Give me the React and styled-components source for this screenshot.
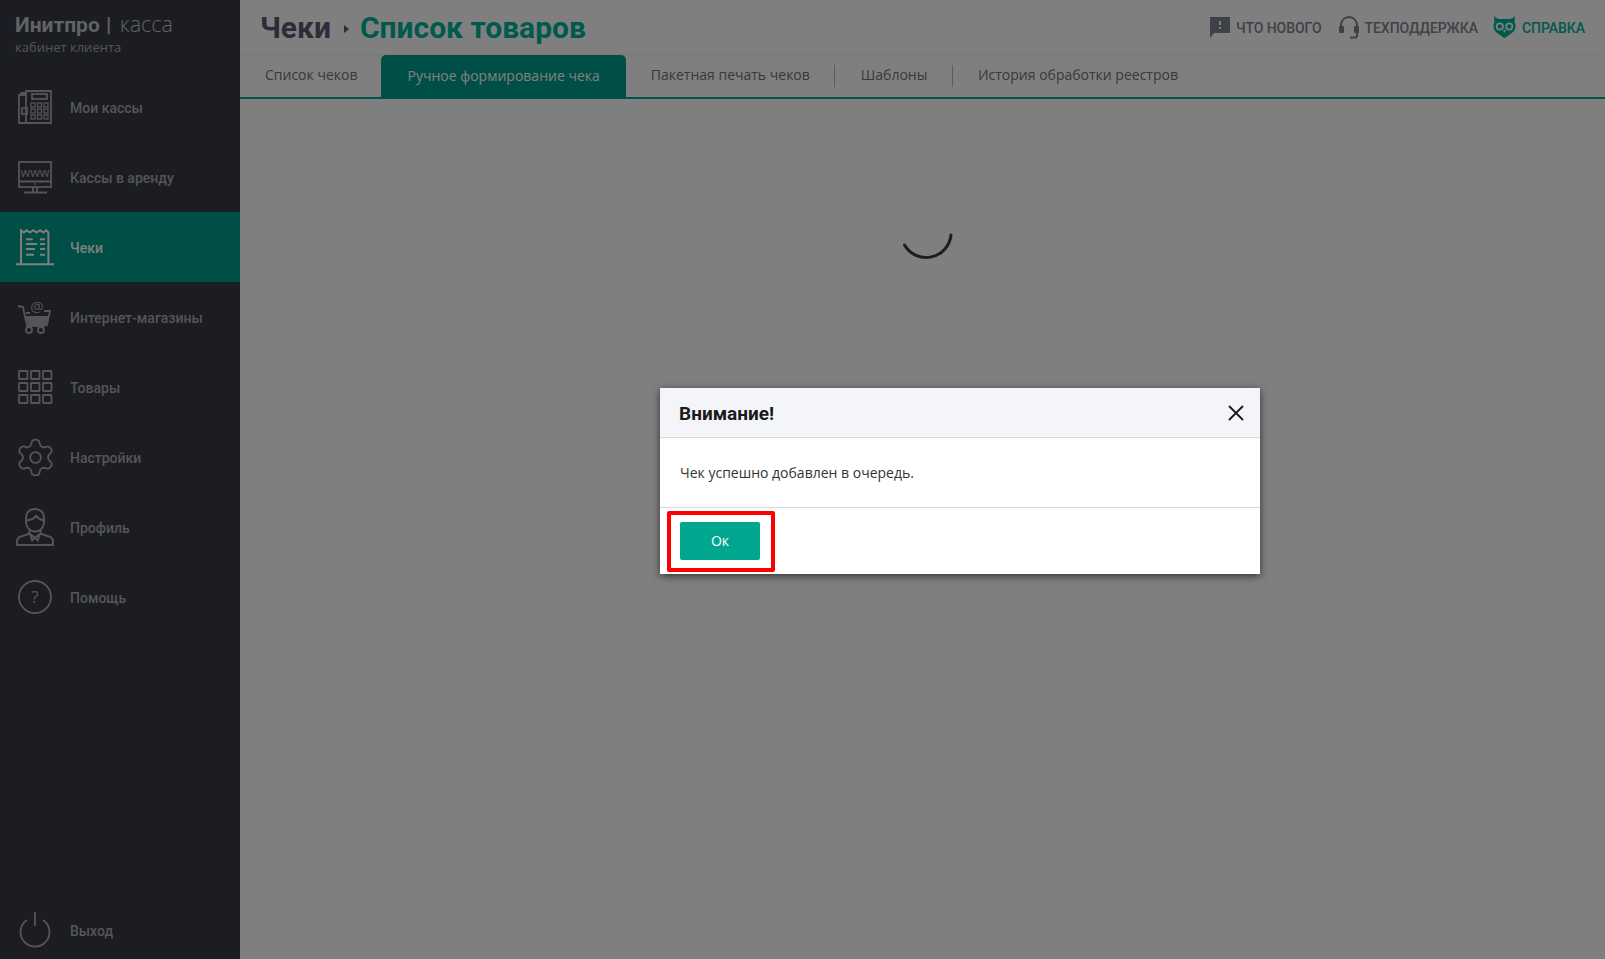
import React from "react";
import styled, { createGlobalStyle } from "styled-components";
import { Settings } from "lucide-react";

const GlobalStyle = createGlobalStyle`
  html, body {
    margin: 0;
    height: 100%;
    background: #fff;
  }
  * {
    box-sizing: border-box;
  }
  #root {
    height: 100%;
  }
`;

const Svg = ({ size = 34, children }) => (
  <svg
    width={size}
    height={size}
    viewBox="0 0 34 34"
    fill="none"
    stroke="currentColor"
    strokeWidth="1.8"
  >
    {children}
  </svg>
);

const FaxIcon = () => (
  <Svg>
    <path d="M8 5H1v28h32V1H8v32" />
    <path d="M1 8c0-3 1.500-5 3-5h4" />
    <rect x="14" y="4" width="15" height="5" />
    <rect x="4" y="18" width="5" height="6" />
    {[13, 19.5, 26].map((x) =>
      [13, 19, 25].map((y) => (
        <rect key={`${x}-${y}`} x={x} y={y} width="4" height="4" strokeWidth="1.3" />
      ))
    )}
  </Svg>
);

const WwwIcon = () => (
  <Svg>
    <rect x="1" y="2" width="32" height="25" />
    <path d="M1 21.500h32M15 27v5M19 27v5M6 32.500h23" />
    <circle cx="17" cy="24" r="0.900" fill="currentColor" stroke="none" />
    <text x="17" y="17" textAnchor="middle" fontFamily="'Open Sans', sans-serif" fontSize="12.500" fill="currentColor" stroke="none">
      www
    </text>
  </Svg>
);

const ReceiptIcon = () => (
  <Svg size={38}>
    <path d="M4.500 32V2l2.500 2 2.500-2 3 2 3-2 3 2 3-2 3 2 2.500-2 2 2V32" />
    <path d="M0 32.500h34" />
    <path d="M9 10h6M9 14.300h10M9 18.800h8M9 24h7M21.500 10h4.500M21.500 14.300h4.500M21.500 18.800h4.500M21.500 24h4.500" />
  </Svg>
);

const CartIcon = () => (
  <Svg>
    <path d="M0 6l5 1 4 19h18" />
    <path d="M8 13h4M26 11h6l-3 14H11l-2-8h21" />
    <path d="M9 17h21l-2 8H11z" fill="currentColor" />
    <circle cx="11" cy="30" r="3" />
    <circle cx="23" cy="30" r="3" />
    <text x="19" y="12" textAnchor="middle" fontFamily="'Open Sans', sans-serif" fontSize="15" fill="currentColor" stroke="none">
      @
    </text>
  </Svg>
);

const GridIcon = () => (
  <Svg>
    {[1, 13, 25].map((x) =>
      [1, 13, 25].map((y) => (
        <rect key={`${x}-${y}`} x={x} y={y} width="8.500" height="8" rx="0.500" />
      ))
    )}
  </Svg>
);

const ProfileIcon = () => (
  <Svg size={38}>
    <path d="M9 13V8c0-4 3.500-7 8-7s8 3 8 7v5" />
    <path d="M9 11c4 0 7-1.500 9-4 1.500 2 4 3.500 7 4v2c0 4.500-3.500 8-8 8s-8-3.500-8-8z" />
    <path d="M12 20v3l-9 3-2 2.500V33h32v-4.500L31 26l-9-3v-3" />
    <path d="M12 23l5 3.500 5-3.500M13 24l1.500 5 2.500-2.500 2.500 2.500 1.500-5" />
  </Svg>
);

const HelpIcon = () => (
  <Svg>
    <circle cx="17" cy="17" r="16" />
    <text x="17" y="23" textAnchor="middle" fontFamily="'Open Sans', sans-serif" fontSize="17" fill="currentColor" stroke="none">
      ?
    </text>
  </Svg>
);

const PowerIcon = () => (
  <Svg>
    <path d="M9 7A14.500 14.500 0 1 0 25 7" />
    <path d="M17 -1v14" />
  </Svg>
);

const MessageIcon = () => (
  <svg width="21" height="21" viewBox="0 0 21 21" fill="currentColor">
    <path d="M1 0h20v16H5l-4 5z" />
    <rect x="10" y="4" width="2" height="4" fill="#ffffff" />
    <rect x="10" y="10" width="2" height="2" fill="#ffffff" />
  </svg>
);

const HeadsetIcon = () => (
  <svg width="20" height="23" viewBox="0 0 20 23" fill="none" stroke="currentColor" strokeWidth="2">
    <path d="M2 14V9a8 8 0 0 1 16 0v12" />
    <rect x="0" y="10" width="5" height="7" rx="1" fill="currentColor" stroke="none" />
    <rect x="15" y="10" width="5" height="7" rx="1" fill="currentColor" stroke="none" />
    <path d="M11 21.500h7" />
  </svg>
);

const OwlIcon = () => (
  <svg width="23" height="22" viewBox="0 0 23 22" fill="currentColor">
    <path d="M1 0c2 2 4 3 5.500 3h10C18 3 20 2 22 0l-.5 6c1.500 2.500 1.500 6.500-.5 9-2 2.500-6 4.500-9.500 7C8 19.500 4 17.500 2 15 0 12.500 0 8.500 1.500 6z" />
    <circle cx="6.800" cy="10.500" r="4" fill="#ffffff" />
    <circle cx="16.200" cy="10.500" r="4" fill="#ffffff" />
    <circle cx="6.800" cy="10.500" r="2.200" />
    <circle cx="16.200" cy="10.500" r="2.200" />
    <path d="M10 14h3l-1.500 3z" fill="#ffffff" />
  </svg>
);

const CloseIcon = () => (
  <svg width="16" height="16" viewBox="0 0 16 16" stroke="#1a1a1a" strokeWidth="1.800">
    <path d="M1 1l14 14M15 1L1 15" />
  </svg>
);

const menu = [
  { label: "Мои кассы", icon: <FaxIcon /> },
  { label: "Кассы в аренду", icon: <WwwIcon /> },
  { label: "Чеки", icon: <ReceiptIcon />, active: true },
  { label: "Интернет-магазины", icon: <CartIcon /> },
  { label: "Товары", icon: <GridIcon /> },
  { label: "Настройки", icon: <Settings size={43} strokeWidth={1} /> },
  { label: "Профиль", icon: <ProfileIcon /> },
  { label: "Помощь", icon: <HelpIcon /> },
];

const tabs = [
  { label: "Список чеков", first: true },
  { label: "Ручное формирование чека", active: true },
  { label: "Пакетная печать чеков", divided: true },
  { label: "Шаблоны", divided: true, wide: true },
  { label: "История обработки реестров" },
];

function App() {
  return (
    <Page>
      <GlobalStyle />
      <Sidebar>
        <Logo>
          <LogoTitle>
            <b>Инитпро |</b> касса
          </LogoTitle>
          <LogoCaption>кабинет клиента</LogoCaption>
        </Logo>
        <Menu>
          {menu.map((item) => (
            <MenuItem key={item.label} $active={item.active}>
              <IconSlot>{item.icon}</IconSlot>
              <MenuLabel>{item.label}</MenuLabel>
            </MenuItem>
          ))}
        </Menu>
        <LogoutItem>
          <IconSlot>
            <PowerIcon />
          </IconSlot>
          <MenuLabel>Выход</MenuLabel>
        </LogoutItem>
      </Sidebar>
      <Main>
        <Header>
          <Title>
            Чеки
            <TitleArrow />
            <TitleAccent>Список товаров</TitleAccent>
          </Title>
          <HeaderLinks>
            <HeaderLink>
              <MessageIcon />
              <span>Что нового</span>
            </HeaderLink>
            <HeaderLink>
              <HeadsetIcon />
              <span>Техподдержка</span>
            </HeaderLink>
            <HeaderLink $accent>
              <OwlIcon />
              <span>Справка</span>
            </HeaderLink>
          </HeaderLinks>
        </Header>
        <Tabs>
          {tabs.map((tab) => (
            <Tab
              key={tab.label}
              $active={tab.active}
              $divided={tab.divided}
              $first={tab.first}
              $wide={tab.wide}
            >
              {tab.label}
            </Tab>
          ))}
        </Tabs>
        <Content>
          <svg width="60" height="60" viewBox="0 0 60 60" fill="none">
            <path d="M7.500 43a25 25 0 0 0 46.500-10" stroke="#363a46" strokeWidth="3" strokeLinecap="round" />
          </svg>
        </Content>
      </Main>
      <Overlay />
      <Dialog>
        <DialogHeader>
          <DialogTitle>Внимание!</DialogTitle>
          <CloseButton>
            <CloseIcon />
          </CloseButton>
        </DialogHeader>
        <DialogBody>Чек успешно добавлен в очередь.</DialogBody>
        <DialogFooter>
          <OkButton>Ок</OkButton>
          <Highlight />
        </DialogFooter>
      </Dialog>
    </Page>
  );
}

const Page = styled.div`
  display: flex;
  height: 959px;
  overflow: hidden;
  position: relative;
`;

const Sidebar = styled.aside`
  display: flex;
  flex-direction: column;
  flex: 0 0 240px;
  background-color: #363a46;
`;

const Logo = styled.div`
  height: 72px;
  padding: 11px 0 0 15px;
  font-family: "Open Sans", sans-serif;
  color: #c0c4cc;
`;

const LogoTitle = styled.div`
  font-size: 21.500px;
  font-weight: 300;
  line-height: 26px;
  word-spacing: 1px;

  b {
    margin-right: 2px;
    font-family: Roboto, sans-serif;
    font-size: 21px;
    font-weight: 700;
  }
`;

const LogoCaption = styled.div`
  font-size: 13px;
  line-height: 18px;
  color: #a6a9b2;
`;

const Menu = styled.nav`
  flex: 1;
`;

const MenuItem = styled.div`
  display: flex;
  align-items: center;
  flex-shrink: 0;
  height: 70px;
  font-family: Roboto, sans-serif;
  font-size: 14px;
  font-weight: 500;
  color: ${(props) => (props.$active ? "#ffffff" : "#aaaaaa")};
  background-color: ${(props) => (props.$active ? "#009e8c" : "transparent")};
`;

const MenuLabel = styled.span`
  margin-top: 2px;
`;

const LogoutItem = styled(MenuItem)`
  height: 58px;
`;

const IconSlot = styled.span`
  display: flex;
  justify-content: center;
  align-items: center;
  width: 70px;

  svg {
    overflow: visible;
  }
`;

const Main = styled.main`
  flex: 1;
  display: flex;
  flex-direction: column;
  background-color: #ffffff;
`;

const Header = styled.header`
  display: flex;
  justify-content: space-between;
  align-items: center;
  height: 55px;
  padding: 0 20px 0 20px;
  border-bottom: 1px solid #eeeeee;
`;

const Title = styled.h1`
  display: flex;
  align-items: center;
  margin: 0;
  font-family: Roboto, sans-serif;
  font-size: 30px;
  font-weight: 700;
  color: #585a70;
`;

const TitleArrow = styled.span`
  width: 0;
  height: 0;
  margin: 3px 11px 0 13px;
  border-style: solid;
  border-width: 4px 0 4px 5px;
  border-color: transparent transparent transparent #585a70;
`;

const TitleAccent = styled.span`
  color: #00b39a;
`;

const HeaderLinks = styled.div`
  display: flex;
  align-items: center;
  gap: 17px;
`;

const HeaderLink = styled.a`
  display: flex;
  align-items: center;
  gap: 6px;
  margin-left: ${(props) => (props.$accent ? "-2px" : "0")};
  font-family: Roboto, sans-serif;
  font-size: 14px;
  font-weight: 500;
  letter-spacing: -0.05px;
  text-transform: uppercase;
  color: ${(props) => (props.$accent ? "#00b39a" : "#7f8290")};

  span {
    margin-top: 2px;
  }
`;

const Tabs = styled.div`
  display: flex;
  height: 44px;
  border-bottom: 2px solid #00a78e;
  font-family: "Open Sans", sans-serif;
  font-size: 14px;
`;

const Tab = styled.div`
  position: relative;
  display: flex;
  align-items: center;
  padding: 0 ${(props) => (props.$active ? "26px" : "25px")} ${(props) => (props.$active ? "2px" : "4px")};
  padding-right: ${(props) => (props.$first ? "24px" : props.$wide ? "25.500px" : "")};
  padding-left: ${(props) => (props.$wide ? "26px" : "")};
  border-radius: 5px 5px 0 0;
  color: ${(props) => (props.$active ? "#ffffff" : "#6f7080")};
  background-color: ${(props) => (props.$active ? "#009e8c" : "transparent")};

  ${(props) =>
    props.$divided &&
    `
    &::after {
      content: "";
      position: absolute;
      right: 0;
      top: 10px;
      height: 22px;
      border-right: 1px solid #b8b8c0;
    }
  `}
`;

const Content = styled.div`
  display: flex;
  justify-content: center;
  align-items: flex-start;
  flex: 1;
  padding: 103px 0 0 8px;
`;

const Overlay = styled.div`
  position: absolute;
  inset: 0;
  background-color: rgba(0, 0, 0, 0.5);
`;

const Dialog = styled.div`
  position: absolute;
  left: 660px;
  top: 388px;
  width: 600px;
  background-color: #ffffff;
  box-shadow: 0 2px 8px rgba(0, 0, 0, 0.6);
`;

const DialogHeader = styled.div`
  display: flex;
  justify-content: space-between;
  align-items: center;
  height: 50px;
  padding: 0 16px 0 19px;
  background-color: #f3f5f9;
  border-bottom: 1px solid #d8d8e4;
`;

const DialogTitle = styled.span`
  margin-top: 2px;
  font-family: Roboto, sans-serif;
  font-size: 19px;
  font-weight: 700;
  color: #1a1a1a;
`;

const CloseButton = styled.span`
  display: flex;
`;

const DialogBody = styled.div`
  display: flex;
  align-items: center;
  height: 70px;
  padding: 0 20px 1px;
  border-bottom: 1px solid #d8d8e4;
  font-family: "Open Sans", sans-serif;
  font-size: 14px;
  color: #333333;
`;

const DialogFooter = styled.div`
  position: relative;
  height: 66px;
  padding: 14px 20px;
`;

const OkButton = styled.button`
  width: 80px;
  height: 38px;
  padding: 0 0 2px;
  border: 0;
  border-radius: 2px;
  background-color: #00a78e;
  font-family: "Open Sans", sans-serif;
  font-size: 14px;
  color: #ffffff;
`;

const Highlight = styled.div`
  position: absolute;
  left: 7px;
  top: 3px;
  width: 108px;
  height: 61px;
  border: 4px solid #ff0000;
  border-radius: 2px;
`;

export default App;
